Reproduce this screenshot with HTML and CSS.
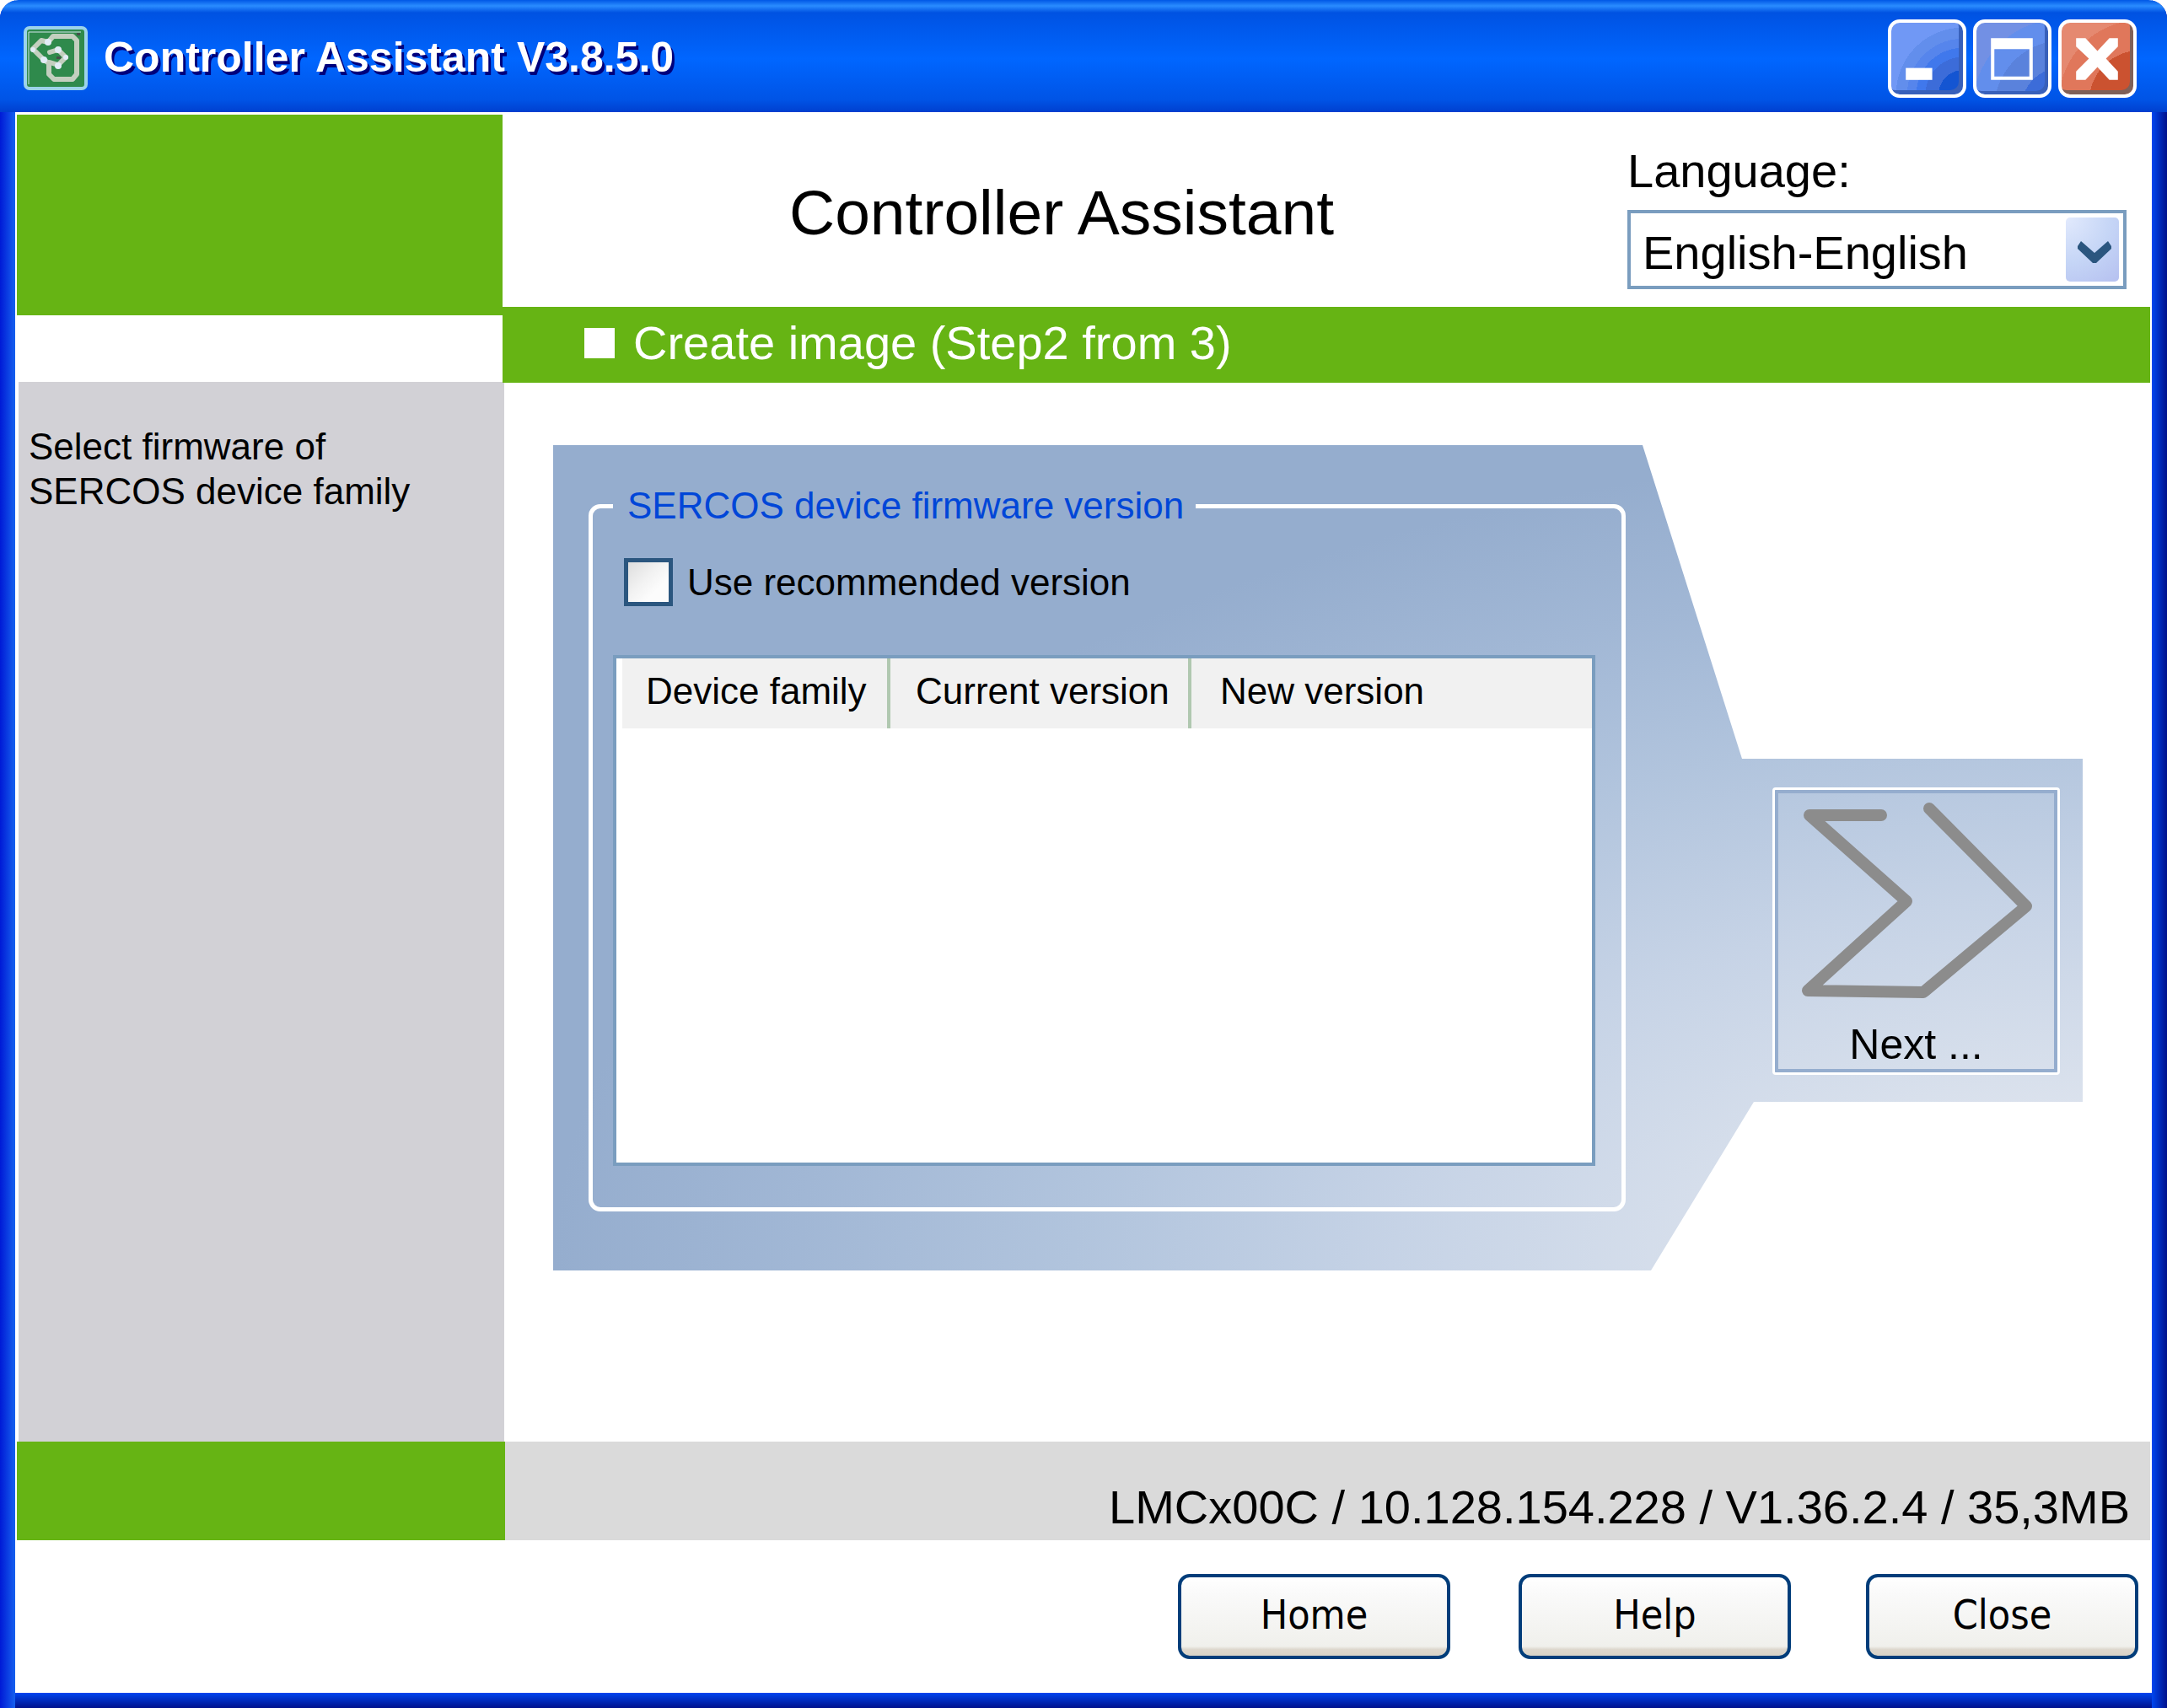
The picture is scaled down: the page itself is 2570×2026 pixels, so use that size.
FILE: index.html
```html
<!DOCTYPE html>
<html lang="en">

<head>
  <meta charset="UTF-8" />
  <title>Controller Assistant V3.8.5.0</title>
  <link rel="stylesheet" href="styles.css">
</head>

<body>
  <div class="window">
    <header class="titlebar">
      <svg class="app-icon" viewBox="0 0 76 76" aria-hidden="true">
        <rect x="2" y="2" width="72" height="72" rx="5" fill="#2f8a4c" stroke="#9bd3ea" stroke-width="4" />
        <path d="M6 69V7H68" fill="none" stroke="#d3e4ea" stroke-width="1" />
        <g fill="none" stroke="#c3cfbf" stroke-width="6" stroke-linejoin="round" stroke-linecap="round">
          <path d="M29 19 L35 12 H58 L63 17 V57 L58 63 H36 L30 57 V44 L24 40 L11 27 L21 17 Z" />
          <path d="M31 31 L41 28 L50 37 L41 46 L31 43" />
        </g>
        <g fill="#e2ecf6">
          <circle cx="29" cy="19" r="4" />
          <circle cx="11" cy="28" r="3" />
          <circle cx="24" cy="40" r="4" />
          <circle cx="41" cy="28" r="4" />
          <circle cx="50" cy="37" r="3" />
          <circle cx="41" cy="47" r="4" />
        </g>
        <g fill="#44504a">
          <rect x="39" y="36" width="5" height="3" />
          <rect x="63" y="8" width="4" height="3" />
        </g>
      </svg>
      <span class="titlebar-text">Controller Assistant V3.8.5.0</span>
      <div class="titlebar-buttons">
        <button class="win-btn minimize" aria-label="Minimize">
          <svg viewBox="0 0 84 84"><rect x="17" y="53" width="31" height="14" fill="#fff" /></svg>
        </button>
        <button class="win-btn maximize" aria-label="Maximize">
          <svg viewBox="0 0 84 84"><path d="M17 18H66V67H17Z M21 31V63H62V31Z" fill="#fff" fill-rule="evenodd" /></svg>
        </button>
        <button class="win-btn exit" aria-label="Close window">
          <svg viewBox="0 0 84 84"><path d="M17 18H28L42 33L56 18H66V28L52 42L66 57V67H56L42 52L28 67H17V57L32 42L17 28Z" fill="#fff" /></svg>
        </button>
      </div>
    </header>

    <div class="window-body">
      <div class="columns">
        <aside class="side">
          <div class="logo-block"></div>
          <div class="hint">Select firmware of<br>SERCOS device family</div>
        </aside>

        <main class="main">
          <div class="header">
            <h1>Controller Assistant</h1>
            <div class="language">
              <label for="language">Language:</label>
              <div class="select-wrap">
                <select id="language">
                  <option>English-English</option>
                </select>
                <svg class="select-arrow" viewBox="0 0 63 76" aria-hidden="true">
                  <path d="M14 34 L18 28 L34 42 L50 28 L54 34 V37 L36 54 H32 L14 37 Z" fill="#2b567f" />
                </svg>
              </div>
            </div>
          </div>

          <h2 class="step"><span class="step-mark"></span>Create image (Step2 from 3)</h2>

          <div class="content">
            <div class="panel">
              <fieldset>
                <legend>SERCOS device firmware version</legend>
                <label class="check"><input type="checkbox">Use recommended version</label>
                <div class="list">
                  <table>
                    <thead>
                      <tr>
                        <th class="col-family">Device family</th>
                        <th class="col-current">Current version</th>
                        <th>New version</th>
                      </tr>
                    </thead>
                  </table>
                </div>
              </fieldset>

              <button class="next">
                <svg viewBox="0 0 326 240" aria-hidden="true">
                  <path d="M121 26 H36 L151 128 L34 234 L171 236 L293 134 L178 18" />
                </svg>
                <span>Next ...</span>
              </button>
            </div>
          </div>
        </main>
      </div>

      <div class="status">
        <div class="status-mark"></div>
        <div class="status-text">LMCx00C / 10.128.154.228 / V1.36.2.4 / 35,3MB</div>
      </div>

      <footer class="actions">
        <button>Home</button>
        <button>Help</button>
        <button class="close">Close</button>
      </footer>
    </div>
  </div>
</body>

</html>
```

FILE: styles.css
```css
* {
  box-sizing: border-box;
}

body {
  margin: 0;
  background: #fff;
  color: #000;
  font-family: "Liberation Sans", Arial, sans-serif;
  font-size: 44px;
  line-height: 50px;
}

button,
select,
input {
  font: inherit;
  color: inherit;
  margin: 0;
}

.window {
  display: flex;
  flex-direction: column;
  min-height: 100vh;
  padding: 0 18px 18px;
  border-radius: 22px 22px 0 0;
  background:
    linear-gradient(to right, #001ad6, #1560ee) left / 18px 100% no-repeat,
    linear-gradient(to right, #0046f0, #00118c) right / 18px 100% no-repeat,
    linear-gradient(to bottom, #0046f0, #00118c) bottom / 100% 18px no-repeat;
}

/* title bar */

.titlebar {
  display: flex;
  align-items: center;
  height: 133px;
  margin: 0 -18px;
  padding: 5px 36px 0 28px;
  border-radius: 22px 22px 0 0;
  background: linear-gradient(to bottom,
    #0058e6 0,
    #2a8cff 7px,
    #0052e2 15px,
    #0066ff 70px,
    #0054e6 118px,
    #003fcf 133px);
}

.app-icon {
  width: 76px;
  height: 76px;
}

.titlebar-text {
  flex: 1;
  margin-left: 19px;
  padding-bottom: 3px;
  color: #fff;
  font-size: 50px;
  font-weight: bold;
  line-height: 58px;
  text-shadow: 3px 4px 0 #00007c;
}

.titlebar-buttons {
  display: flex;
  gap: 8px;
}

.win-btn {
  width: 93px;
  height: 93px;
  padding: 0;
  border: 4px solid #fff;
  border-radius: 14px;
}

.win-btn svg {
  display: block;
  width: 100%;
  height: 100%;
}

.minimize {
  background: radial-gradient(circle at 100% 100%, #1455d2 0 24%, #3c6cd9 24% 37%, #4078ec 37% 46%, #5685ec 46% 55%, #628eec 55% 66%, #7098f5 66%);
  box-shadow: inset -5px -5px 0 #3860ba;
}

.maximize {
  background: radial-gradient(circle at 120% 120%, #3c6cd9 0 34%, #5a82dc 34% 56%, #628eec 56% 74%, #7290e4 74%);
  box-shadow: inset -4px -4px 0 #3860ba;
}

.exit {
  background: radial-gradient(circle at 110% 110%, #cb5230 0 46%, #e0775b 46% 73%, #e58970 73%);
  box-shadow: inset -4px -5px 0 #7f6058;
}

/* layout */

.window-body {
  display: flex;
  flex-direction: column;
  flex: 1;
  padding: 3px 2px 0;
  background: #fff;
}

.columns {
  display: flex;
  flex: 1;
}

.side {
  display: flex;
  flex-direction: column;
  width: 576px;
}

.logo-block {
  height: 238px;
  margin-bottom: 79px;
  background: #66b414;
}

.hint {
  flex: 1;
  margin: 0 -2px 0 2px;
  padding: 50px 12px;
  background: #d2d1d6;
  line-height: 53px;
}

.main {
  display: flex;
  flex-direction: column;
  flex: 1;
}

.header {
  display: flex;
  align-items: flex-start;
  height: 228px;
  padding-right: 28px;
}

h1 {
  flex: 1;
  margin: 72px 0 0 340px;
  font-size: 75px;
  font-weight: normal;
  line-height: 88px;
}

.language {
  width: 592px;
  margin-top: 35px;
  font-size: 56px;
  line-height: 64px;
}

.language label {
  display: block;
  margin-bottom: 14px;
}

.select-wrap {
  position: relative;
}

select {
  display: block;
  width: 100%;
  height: 94px;
  padding: 8px 80px 0 14px;
  border: 4px solid #7a9dbf;
  border-radius: 0;
  background: #fff;
  appearance: none;
}

.select-arrow {
  position: absolute;
  top: 9px;
  right: 9px;
  width: 63px;
  height: 76px;
  border-radius: 5px;
  background: radial-gradient(circle at 0 0, #e2eafd, #c5d5f6 55%, #b5c0f0);
  pointer-events: none;
}

.step {
  display: flex;
  align-items: center;
  gap: 22px;
  height: 90px;
  margin: 0;
  padding: 0 0 4px 97px;
  background: #66b414;
  color: #fff;
  font-size: 56px;
  font-weight: normal;
  line-height: 64px;
}

.step-mark {
  width: 36px;
  height: 36px;
  background: #fff;
}

.content {
  flex: 1;
  padding: 74px 80px 80px 60px;
}

/* blue panel with the Next flap on the right */

.panel {
  display: flex;
  align-items: flex-start;
  padding: 47px 27px 70px 42px;
  background: radial-gradient(farthest-side at 100% 100%, #e9edf4, #dbe2ed 20%, #c6d3e6 45%, #b1c4dd 66%, #a1b7d5 84%, #95adce);
  clip-path: polygon(0 0,
    calc(100% - 522px) 0,
    calc(100% - 404px) 372px,
    100% 372px,
    100% 779px,
    calc(100% - 390px) 779px,
    calc(100% - 512px) 100%,
    0 100%);
}

fieldset {
  flex: 1;
  min-width: 0;
  margin: 0;
  padding: 0 31px 49px 24px;
  border: 5px solid #fff;
  border-radius: 14px;
}

legend {
  padding: 0 14px 0 17px;
  color: #0046d8;
}

.check {
  display: flex;
  align-items: center;
  gap: 17px;
  margin: 37px 0 58px 13px;
}

.check input {
  width: 58px;
  height: 57px;
  border: 5px solid #2b567f;
  background: linear-gradient(135deg, #dedede, #f1f1f1 40%, #fcfcfc 70%);
  appearance: none;
}

.check input:checked {
  background: #2b567f;
}

.list {
  min-height: 606px;
  padding-left: 7px;
  border: 4px solid #7a9dbf;
  background: #fff;
}

table {
  width: 100%;
  border-collapse: collapse;
}

th {
  padding: 14px 0 19px 30px;
  background: #f1f1f1;
  font-weight: normal;
  text-align: left;
  white-space: nowrap;
}

.col-family {
  width: 316px;
  padding-left: 28px;
  border-right: 4px solid #b0c8b0;
}

.col-current {
  width: 357px;
  border-right: 4px solid #b0c8b0;
}

th:last-child {
  padding-left: 34px;
}

.next {
  width: 341px;
  margin: 359px 0 0 174px;
  padding: 0;
  border: 3px solid #fff;
  border-radius: 4px;
  outline: 4px solid #95adce;
  outline-offset: -7px;
  background: none;
  font-size: 50px;
  line-height: 58px;
}

.next svg {
  display: block;
  width: 326px;
  height: 240px;
  margin: 4px auto 0;
  overflow: visible;
}

.next path {
  fill: none;
  stroke: #8c8c8c;
  stroke-width: 14;
  stroke-linecap: round;
  stroke-linejoin: round;
}

.next span {
  display: block;
  margin: 29px 0 4px;
}

/* status bar and bottom buttons */

.status {
  display: flex;
  background: #dadada;
}

.status-mark {
  width: 579px;
  background: #66b414;
}

.status-text {
  flex: 1;
  padding: 46px 24px 7px;
  font-size: 56px;
  line-height: 64px;
  text-align: right;
}

.actions {
  display: flex;
  justify-content: flex-end;
  gap: 81px;
  padding: 40px 14px 40px 0;
}

.actions button {
  width: 323px;
  height: 101px;
  padding: 0 0 6px;
  border: 4px solid #003d7a;
  border-radius: 14px;
  background: linear-gradient(to bottom, #fff 0, #fafafa 20%, #f0f0ec 88%, #ddd7cd 92%, #d8d2c6 100%);
  font-family: "DejaVu Sans Condensed", "Noto Sans", sans-serif;
  font-size: 48px;
}

.actions .close {
  margin-left: 8px;
}
```
